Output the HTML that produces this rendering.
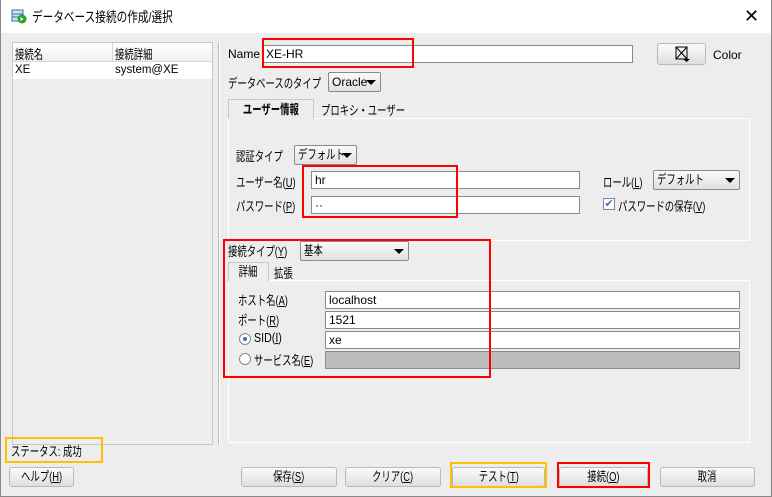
<!DOCTYPE html>
<html><head><meta charset="utf-8"><style>
*{box-sizing:border-box;margin:0;padding:0}
body{width:772px;height:497px;background:#ededed;font-family:"Liberation Sans","Noto Sans CJK JP",sans-serif;font-size:12px;color:#000;position:relative;overflow:hidden}
.a{position:absolute;white-space:nowrap}
.j{font-size:13px;transform:scaleX(.72);transform-origin:0 0;margin-top:-1px}
.s{display:inline-block;font-size:13px;transform:scaleX(.72);transform-origin:0 0}
.c{display:inline-block;font-size:13px;transform:scaleX(.72);transform-origin:50% 0}
.in{position:absolute;background:#fff;border:1px solid #8a8a8a;height:18px;padding:1px 3px;line-height:15px}
.sel{position:absolute;border:1px solid #8a8a8a;border-radius:2px;background:linear-gradient(#fafafa,#e0e0e0);height:20px;padding:0 3px;line-height:18px;overflow:hidden;white-space:nowrap}
.sel:after{content:"";position:absolute;right:4px;top:7px;border-left:5px solid transparent;border-right:5px solid transparent;border-top:5px solid #000}
.btn{position:absolute;border:1px solid #b8b8b8;border-radius:3px;background:linear-gradient(#fbfbfb,#dedede);height:20px;text-align:center;line-height:18px;white-space:nowrap}
.rb{position:absolute;border:2px solid #f00}
.ob{position:absolute;border:2px solid #ffc000}
</style></head><body>
<div class="a" style="left:0;top:0;width:772px;height:33px;background:#fff"></div>
<div class="a" style="left:0;top:0;width:1px;height:497px;background:#888"></div>
<div class="a" style="left:771px;top:0;width:1px;height:497px;background:#888"></div>
<div class="a" style="left:0;top:496px;width:772px;height:1px;background:#888"></div>
<svg class="a" style="left:11px;top:9px" width="16" height="15"><rect x="1" y="1" width="11" height="11" fill="#cfe0f4" stroke="#3a6fb5"/><line x1="1" y1="5" x2="12" y2="5" stroke="#3a6fb5"/><line x1="1" y1="8" x2="12" y2="8" stroke="#3a6fb5"/><circle cx="11" cy="10" r="4.5" fill="#2aa52a"/><path d="M9.5 8v4l3-2z" fill="#fff"/></svg>
<div class="a j" style="left:32px;top:8px;font-size:14px;transform:scaleX(.76)">データベース接続の作成/選択</div>
<div class="a" style="left:744px;top:6px;font-size:18px">✕</div>
<!-- left list -->
<div class="a" style="left:12px;top:42px;width:201px;height:403px;border:1px solid #c8c8c8;background:#ededed"></div>
<div class="a" style="left:13px;top:43px;width:199px;height:19px;background:linear-gradient(#fff,#f0f0f0);border-bottom:1px solid #d8d8d8"></div>
<div class="a" style="left:112px;top:43px;width:1px;height:36px;background:#d8d8d8"></div>
<div class="a" style="left:13px;top:62px;width:199px;height:17px;background:#fff"></div>
<div class="a j" style="left:15px;top:45px">接続名</div>
<div class="a j" style="left:115px;top:45px">接続詳細</div>
<div class="a" style="left:15px;top:64px;font-size:11.5px">XE</div>
<div class="a" style="left:115px;top:64px;font-size:11.5px">system@XE</div>
<div class="a" style="left:218px;top:42px;width:2px;height:403px;border-left:1px solid #bbb;border-right:1px solid #fff"></div>
<!-- top -->
<div class="a" style="left:228px;top:47px">Name</div>
<div class="in" style="left:262px;top:45px;width:371px">XE-HR</div>
<div class="rb" style="left:262px;top:38px;width:152px;height:30px"></div>
<div class="btn" style="left:657px;top:43px;width:49px;height:22px"><svg width="18" height="18" style="margin-top:1px"><rect x="3" y="2" width="11" height="12" fill="none" stroke="#000"/><path d="M3 2l11 12M14 2L3 14" stroke="#000"/><path d="M10 14h7l-3.5 3z" fill="#000"/></svg></div>
<div class="a" style="left:713px;top:48px">Color</div>
<div class="a j" style="left:228px;top:74px">データベースのタイプ</div>
<div class="sel" style="left:328px;top:72px;width:53px;padding-right:14px">Oracle</div>
<!-- tabs 1 -->
<div class="a" style="left:228px;top:118px;width:522px;height:123px;border:1px solid #fff"></div>
<div class="a" style="left:228px;top:99px;width:86px;height:20px;border:1px solid #c8c8c8;border-bottom:none;background:#ededed;text-align:center;line-height:19px;font-weight:bold"><span class="c">ユーザー情報</span></div>
<div class="a j" style="left:321px;top:101px">プロキシ・ユーザー</div>
<div class="a j" style="left:236px;top:147px">認証タイプ</div>
<div class="sel" style="left:294px;top:145px;width:63px"><span class="s">デフォルト</span></div>
<div class="a j" style="left:236px;top:173px">ユーザー名(<u>U</u>)</div>
<div class="in" style="left:311px;top:171px;width:269px">hr</div>
<div class="a j" style="left:236px;top:197px">パスワード(<u>P</u>)</div>
<div class="in" style="left:311px;top:196px;width:269px">··</div>
<div class="rb" style="left:302px;top:165px;width:156px;height:53px"></div>
<div class="a j" style="left:603px;top:173px">ロール(<u>L</u>)</div>
<div class="sel" style="left:653px;top:170px;width:87px"><span class="s">デフォルト</span></div>
<div class="a" style="left:603px;top:198px;width:12px;height:12px;border:1px solid #888;background:#fff;color:#3a6fd0;font-size:11px;line-height:10px;text-align:center">✔</div>
<div class="a j" style="left:618px;top:197px">パスワードの保存(<u>V</u>)</div>
<!-- conn type -->
<div class="a j" style="left:228px;top:242px">接続タイプ(<u>Y</u>)</div>
<div class="sel" style="left:300px;top:241px;width:109px"><span class="s">基本</span></div>
<div class="a" style="left:228px;top:280px;width:522px;height:163px;border:1px solid #fff"></div>
<div class="a" style="left:228px;top:262px;width:41px;height:19px;border:1px solid #c8c8c8;border-bottom:none;background:#ededed;text-align:center;line-height:18px"><span class="c">詳細</span></div>
<div class="a j" style="left:274px;top:264px">拡張</div>
<div class="a j" style="left:238px;top:291px">ホスト名(<u>A</u>)</div>
<div class="in" style="left:325px;top:291px;width:415px">localhost</div>
<div class="a j" style="left:238px;top:311px">ポート(<u>R</u>)</div>
<div class="in" style="left:325px;top:311px;width:415px">1521</div>
<div class="a" style="left:239px;top:333px;width:12px;height:12px;border:1px solid #888;border-radius:50%;background:#fff"><div style="margin:3px;width:4px;height:4px;border-radius:50%;background:#3a6fd0"></div></div>
<div class="a j" style="left:254px;top:331px;transform:scaleX(.82)">SID(<u>I</u>)</div>
<div class="in" style="left:325px;top:331px;width:415px">xe</div>
<div class="a" style="left:239px;top:353px;width:12px;height:12px;border:1px solid #888;border-radius:50%;background:#fff"></div>
<div class="a j" style="left:254px;top:351px">サービス名(<u>E</u>)</div>
<div class="in" style="left:325px;top:351px;width:415px;background:#bdbdbd"></div>
<div class="rb" style="left:223px;top:239px;width:268px;height:139px"></div>
<!-- bottom -->
<div class="ob" style="left:5px;top:437px;width:98px;height:26px"></div>
<div class="a j" style="left:11px;top:442px">ステータス: 成功</div>
<div class="btn" style="left:9px;top:467px;width:65px"><span class="c">ヘルプ(<u>H</u>)</span></div>
<div class="btn" style="left:241px;top:467px;width:96px"><span class="c">保存(<u>S</u>)</span></div>
<div class="btn" style="left:345px;top:467px;width:96px"><span class="c">クリア(<u>C</u>)</span></div>
<div class="btn" style="left:452px;top:467px;width:93px"><span class="c">テスト(<u>T</u>)</span></div>
<div class="ob" style="left:450px;top:462px;width:97px;height:26px"></div>
<div class="btn" style="left:559px;top:467px;width:89px"><span class="c">接続(<u>O</u>)</span></div>
<div class="rb" style="left:557px;top:462px;width:93px;height:26px"></div>
<div class="btn" style="left:660px;top:467px;width:95px"><span class="c">取消</span></div>
</body></html>
